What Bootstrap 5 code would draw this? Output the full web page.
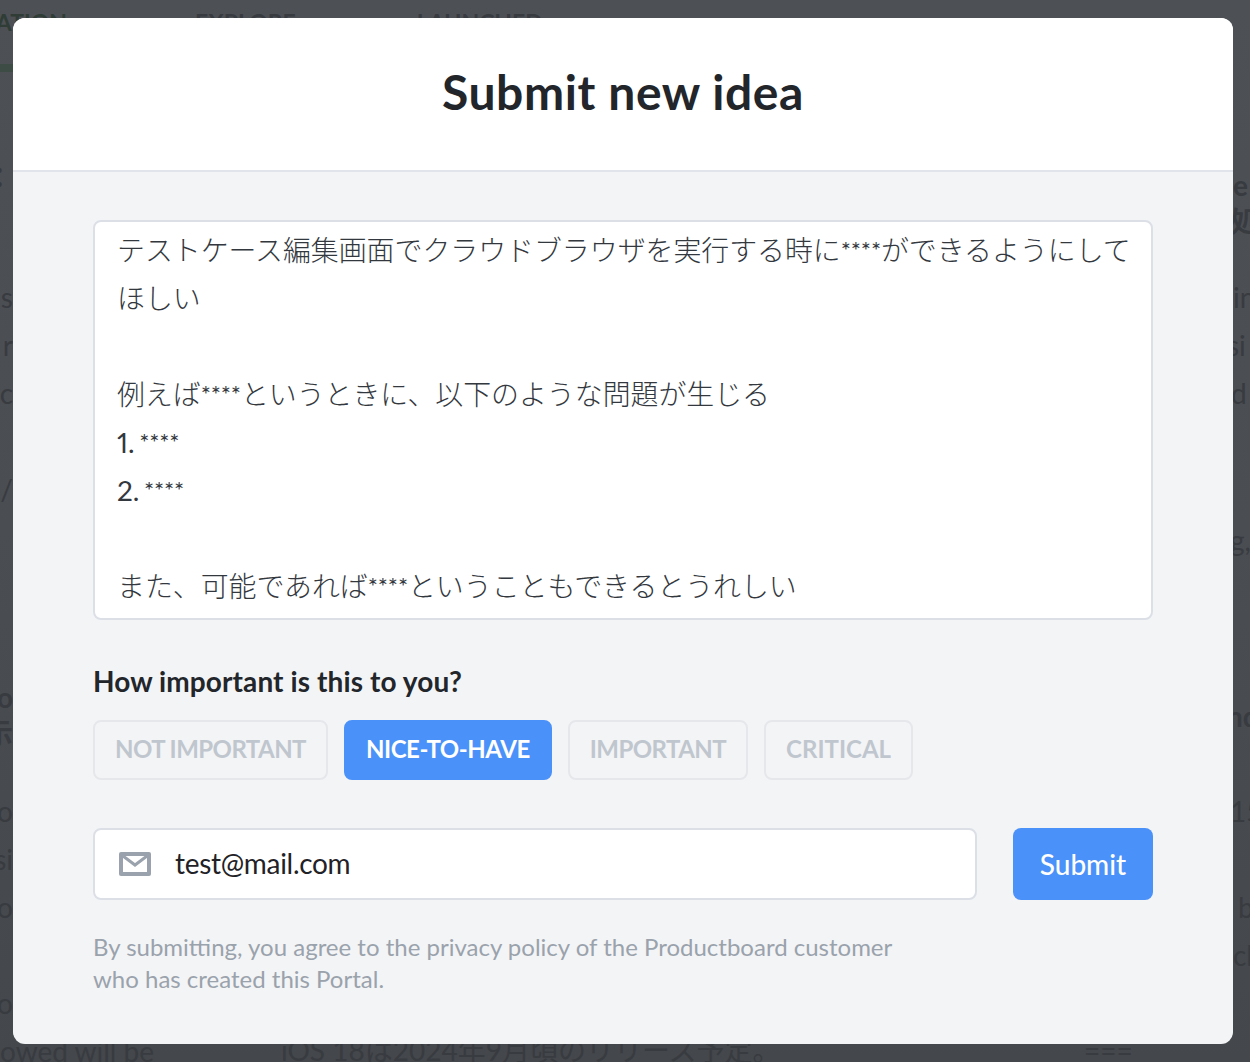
<!doctype html>
<html lang="en">
<head>
<meta charset="utf-8">
<title>Submit new idea</title>
<link href="https://cdn.jsdelivr.net/npm/bootstrap@5.3.0/dist/css/bootstrap.min.css" rel="stylesheet">
<style>
html,body{height:100%;overflow:hidden}
body{background:linear-gradient(180deg,#4d5055 0,#4a4d52 50%,#44474b 100%);font-family:Lato,"Noto Sans CJK JP",sans-serif;color:#22262b}
.ghost{height:1062px;color:#383b40;font-size:28px;overflow:hidden}
.tabs{height:72px;font-size:23px;font-weight:700;padding-top:4px}
.tab-a{width:92px;height:68px;color:#2f3d36;border-bottom:8px solid #3d4c45;text-align:right;flex:none;margin-left:-19px;padding-right:15px;line-height:36px}
.tab-b{margin-left:122px;line-height:36px}
.tab-c{margin-left:121px;line-height:36px}
.cols{height:990px}
.left-c{width:240px;flex:none}
.mid-c{width:986px;flex:none;margin-bottom:-12px}
.right-c{flex:1;overflow:hidden}
.ln{height:48px;line-height:48px;white-space:nowrap}
.lb{height:36px;line-height:36px;font-weight:700;white-space:nowrap}
.cut{width:13px;overflow:hidden;justify-content:flex-end}
.t081{margin-top:81px}.t072{margin-top:72px}.t048{margin-top:48px}.t166{margin-top:166px}.t036{margin-top:36px}
.t095{margin-top:95px}.t034{margin-top:34px}.t099{margin-top:99px}.t134{margin-top:134px}.t053{margin-top:53px}
.x1{padding-left:1px}.x4{padding-left:4px}.x5{padding-left:5px}.x7{padding-left:7px}.x12{padding-left:12px}
.mid-text{padding-left:41px;width:844px;flex:none}
.sheet{position:fixed;left:13px;top:18px;width:1220px;height:1026px;margin:0;border:0;border-radius:12px;background:#f3f4f6;overflow:hidden}
.sheet-head{height:154px;background:#fff;border-bottom:2px solid #e1e4ea;border-radius:0;padding:0 0 4px;justify-content:center}
.sheet-title{font-size:48px;font-weight:700;line-height:1;letter-spacing:.6px;color:#22262b;margin:0;font-family:Lato,sans-serif}
.sheet-body{padding:48px 80px 0}
.idea-box{width:100%;height:400px;padding:4px 4px 0 22px;font-size:27.9px;line-height:48px;color:#33383e;font-weight:300;font-family:Lato,"Noto Sans CJK JP",sans-serif;border:2px solid #dcdfe6;border-radius:8px;overflow:hidden;background:#fff;font-variant-numeric:proportional-nums}
.stars{font-size:24px;letter-spacing:-.15px;font-weight:400;line-height:1;vertical-align:2px}
.num{font-weight:400;margin-right:-3px}
.q-label{font-size:28px;font-weight:700;line-height:36px;letter-spacing:.1px;color:#22262b;margin:43px 0 21px}
.prio{height:60px;padding:0 20px 2px;font-size:24px;font-weight:700;letter-spacing:-.55px;text-transform:uppercase;border:2px solid #e5e7eb;border-radius:8px;background:transparent;color:#c0c6ce;line-height:1}
.prio.chosen{background:#4a91f9;border-color:#4a91f9;color:#fff;letter-spacing:-.45px}
.prio.plain-sp{letter-spacing:0}
.mail-row{margin-top:48px;gap:36px}
.mail-box{height:72px;flex:1;background:#fff;border:2px solid #dcdfe6;border-radius:8px;padding-left:24px}
.mail-input{border:0;background:transparent;padding:0 0 2px;margin-left:24px;font-size:28px;letter-spacing:-.3px;color:#1f2226;font-family:Lato,sans-serif;box-shadow:none}
.mail-input:focus{box-shadow:none;background:transparent}
.send{width:140px;height:72px;background:#4a91f9;border:0;border-radius:8px;color:#fff;font-size:28px;font-weight:500;padding:0}
.send:hover{background:#4a91f9;color:#fff}
.legal{margin:31px 0 0;font-size:24px;line-height:32px;color:#9aa2ac;max-width:820px}
</style>
</head>
<body>
<div class="ghost" aria-hidden="true">
  <div class="tabs d-flex">
    <div class="tab-a">RATION</div>
    <div class="tab-b">EXPLORE</div>
    <div class="tab-c">LAUNCHED</div>
  </div>
  <div class="cols d-flex">
    <div class="left-c">
      <div class="ln cut d-flex t081 fw-bold">ぶ：</div>
      <div class="ln cut d-flex t072">as</div>
      <div class="ln cut d-flex">r</div>
      <div class="ln cut d-flex">c</div>
      <div class="ln cut d-flex t048">d/</div>
      <div class="lb cut d-flex t166">o</div>
      <div class="lb cut d-flex">示</div>
      <div class="ln cut d-flex t036">o</div>
      <div class="ln cut d-flex">si</div>
      <div class="ln cut d-flex">o</div>
      <div class="ln cut d-flex t048">o</div>
      <div class="ln">owed will be</div>
    </div>
    <div class="mid-c d-flex align-items-end">
      <div class="mid-text ln">iOS 18は2024年9月頃のリリース予定。</div>
      <div class="ln">===</div>
    </div>
    <div class="right-c">
      <div class="lb x7 t095">e</div>
      <div class="lb x4">処</div>
      <div class="ln x7 t034">in</div>
      <div class="ln x1">si</div>
      <div class="ln x5">d</div>
      <div class="ln x4 t099">g,</div>
      <div class="lb x1 t134">nd</div>
      <div class="ln x4 t053">15</div>
      <div class="ln x12 t048">b</div>
      <div class="ln x7">cl</div>
    </div>
  </div>
</div>

<div class="modal-content sheet" role="dialog" aria-labelledby="idea-title">
  <div class="modal-header sheet-head">
    <h1 class="modal-title sheet-title" id="idea-title">Submit new idea</h1>
  </div>
  <div class="modal-body sheet-body">
    <div class="form-control idea-box" role="textbox" aria-multiline="true" aria-label="Idea">テストケース編集画面でクラウドブラウザを実行する時に<span class="stars">****</span>ができるようにしてほしい<br><br>例えば<span class="stars">****</span>というときに、以下のような問題が生じる<br><span class="num">1.</span> <span class="stars">****</span><br><span class="num">2.</span> <span class="stars">****</span><br><br>また、可能であれば<span class="stars">****</span>ということもできるとうれしい</div>
    <p class="q-label">How important is this to you?</p>
    <div class="d-flex gap-3">
      <button type="button" class="btn prio">Not important</button>
      <button type="button" class="btn prio chosen">Nice-to-have</button>
      <button type="button" class="btn prio">Important</button>
      <button type="button" class="btn prio plain-sp">Critical</button>
    </div>
    <div class="d-flex mail-row">
      <div class="mail-box d-flex align-items-center">
        <svg width="32" height="24" viewBox="0 0 32 24" aria-hidden="true" class="flex-shrink-0">
          <rect x="0" y="0" width="32" height="24" rx="2" fill="#9aa2ad"/>
          <rect x="4" y="4" width="24" height="16" fill="#fff"/>
          <path d="M4 4 16 13 28 4" fill="none" stroke="#9aa2ad" stroke-width="3"/>
        </svg>
        <input type="email" class="form-control mail-input" value="test@mail.com" aria-label="Email">
      </div>
      <button type="button" class="btn send">Submit</button>
    </div>
    <p class="legal">By submitting, you agree to the privacy policy of the Productboard customer who has created this Portal.</p>
  </div>
</div>
</body>
</html>
